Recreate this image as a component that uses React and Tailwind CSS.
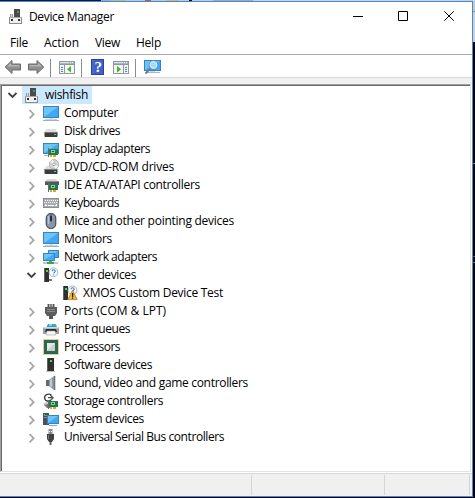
import { useLayoutEffect, useRef } from "react";

/* Text whose tracking is adjusted so that it fills a given width. */
function Label({ w, children }) {
  const ref = useRef(null);
  useLayoutEffect(() => {
    const el = ref.current;
    el.style.letterSpacing = "0px";
    const natural = el.getBoundingClientRect().width;
    el.style.letterSpacing = (w - natural) / children.length + "px";
  }, [w, children]);
  return <span ref={ref} className="inline-block whitespace-nowrap">{children}</span>;
}

function Icon({ children, className = "" }) {
  return (
    <svg width="16" height="16" viewBox="0 0 16 16" className={"block shrink-0 " + className}>
      {children}
    </svg>
  );
}

function Screen({ x, y, w, h }) {
  return (
    <g>
      <rect x={x} y={y} width={w} height={h} fill="#3a83b5" />
      <rect x={x + 1} y={y + 1} width={w - 2} height={h - 2} fill="#3fa9f5" />
      <path d={`M${x + 1} ${y + 1}h${w - 2}L${x + 1} ${y + h - 1}z`} fill="#6cc4fb" />
    </g>
  );
}

function Card({ x, y }) {
  return (
    <g>
      <path d={`M${x} ${y}h1v9h-1z`} fill="#6a6a6a" />
      <rect x={x + 1} y={y + 1} width="9" height="6" fill="#1f7a4d" />
      <rect x={x + 3} y={y + 2} width="4" height="3" fill="#8fd0a8" />
      <rect x={x + 4} y={y + 3} width="2" height="1" fill="#13502f" />
      <path d={`M${x + 2} ${y + 7}h2v2h-2zM${x + 5} ${y + 7}h3v2h-3z`} fill="#f0a020" />
    </g>
  );
}

function Drive({ y }) {
  return (
    <g>
      <path d={`M3.5 ${y}h9l2.5 3.5H1z`} fill="#dedede" />
      <rect x="1.5" y={y + 3} width="13" height="5" rx=".8" fill="#3c3c3c" />
      <rect x="1.5" y={y + 3} width="13" height="1" fill="#7a7a7a" />
      <rect x="11" y={y + 5} width="2" height="1" fill="#45e070" />
    </g>
  );
}

function Tower({ x, y = 1, w = 6, h = 14 }) {
  return (
    <g>
      <rect x={x} y={y} width={w} height={h} fill="#303030" />
      <rect x={x} y={y} width="1" height={h} fill="#626262" />
      <rect x={x + Math.floor(w / 2)} y={y + 2} width="2" height="2" fill="#43e052" />
    </g>
  );
}

function Bubble() {
  return (
    <g>
      <circle cx="10.5" cy="5.3" r="4.4" fill="#f7fafc" stroke="#a6acb2" strokeWidth=".9" />
      <path d="M9 4.2c0-2 3.2-2 3.2 0 0 1.1-1.5 1.2-1.5 2.3M10.7 7.4v1" fill="none" stroke="#2589c5" strokeWidth="1.1" />
    </g>
  );
}

const icons = {
  root: (
    <>
      <rect x="6" y="1" width="6" height="8" fill="#4a4a4a" />
      <rect x="9" y="3" width="2" height="2" fill="#3f9a63" />
      <path d="M2 6h3v3H2z" fill="#9a9a9a" />
      <path d="M3 6h1v3H3z" fill="#d8d8d8" />
      <path d="M1 9h13v7H1z" fill="#8b8b8b" />
      <path d="M2 10h11v5H2z" fill="#f0f0f0" />
      <path d="M1 9h13v1H1z" fill="#a8a8a8" />
      <path d="M3 11h2v2H3zM10 11h2v2h-2z" fill="#2f2f2f" />
    </>
  ),
  monitor: (
    <>
      <Screen x={0} y={1} w={16} h={12} />
      <path d="M6 13h4v1H6z" fill="#d4e2ea" />
      <path d="M2 14h12v1H2z" fill="#c5d3db" />
      <path d="M0 15h16v1H0z" fill="#9bb2c1" />
    </>
  ),
  disk: <Drive y={6} />,
  display: (
    <>
      <Screen x={0} y={2} w={16} h={11} />
      <path d="M1 14h5v1H1z" fill="#a9b9c4" />
      <Card x={5} y={7} />
    </>
  ),
  dvd: (
    <>
      <Drive y={7} />
      <circle cx="11" cy="5.3" r="4.7" fill="#d5d5d5" stroke="#999" strokeWidth=".7" />
      <path d="M11 5.3L7.2 2.8A4.5 4.5 0 0 1 10 .9zM11 5.3l4 2a4.5 4.5 0 0 1-3 2.4z" fill="#f7f7f7" />
      <circle cx="11" cy="5.3" r="1.4" fill="#fff" stroke="#888" strokeWidth=".7" />
    </>
  ),
  ide: (
    <>
      <path d="M4 2h9l2 3H2z" fill="#d8d8d8" />
      <path d="M2 4h14v4H2z" fill="#575757" />
      <path d="M2 4h14v1H2z" fill="#8d8d8d" />
      <Card x={5} y={6} />
    </>
  ),
  keyboard: (
    <>
      <rect x="0" y="3" width="16" height="10" fill="#8a8d91" />
      <rect x="1" y="4" width="14" height="8" fill="#a9acb0" />
      <path d="M2 5.5h13M1 7.5h13M2 9.5h1M13 9.5h1" stroke="#f7f7f7" strokeDasharray="1 1" />
      <path d="M2 10.5h2M5 10.5h6M12 10.5h2" stroke="#f7f7f7" />
    </>
  ),
  mouse: (
    <>
      <rect x="3.2" y=".5" width="9.6" height="15" rx="4.5" fill="#8796ab" stroke="#33383f" />
      <path d="M5.5 3v8" stroke="#b9c4d2" strokeWidth="1.4" />
      <path d="M8 1v5" stroke="#4b5562" />
      <rect x="7" y="2.5" width="2" height="6" rx="1" fill="#272d35" />
    </>
  ),
  network: (
    <>
      <Screen x={5} y={1} w={11} h={8} />
      <Screen x={0} y={4} w={12} h={8} />
      <path d="M6 12h3v2H6z" fill="#53a862" />
      <path d="M0 13h15v2H0z" fill="#c3cbc6" />
      <path d="M4 13h7v2H4z" fill="#35ad4a" />
    </>
  ),
  other: (
    <>
      <Tower x={1} w={5} />
      <path d="M6 12h3v2H6z" fill="#777" />
      <Bubble />
    </>
  ),
  warning: (
    <>
      <Tower x={1} w={5} />
      <Bubble />
      <path d="M10.5 5.3L15.2 14.6H5.8z" fill="#f4b43d" stroke="#b67618" strokeWidth=".8" strokeLinejoin="round" />
      <path d="M10 8h1.2v4H10zM10 12.6h1.2v1.2H10z" fill="#251800" />
    </>
  ),
  ports: (
    <>
      <path d="M4 1h8v4H4z" fill="#b0b0b0" />
      <path d="M5.5 1v3M8 1v3M10.5 1v3" stroke="#555" />
      <path d="M2 4h12v6l-2 3H4l-2-3z" fill="#5c5c5c" />
      <path d="M4 6.5h8M4 8.5h8" stroke="#8b8b8b" strokeWidth="1" />
      <path d="M6 13h4v3H6z" fill="#555" />
    </>
  ),
  print: (
    <>
      <path d="M5 3h8l1 4H3z" fill="#3299df" />
      <path d="M6 3h3v2H6z" fill="#7bd4f4" />
      <path d="M10 3h3v2h-3z" fill="#45bc65" />
      <path d="M1 6h14l1 1v6H0V7z" fill="#9b9fa2" />
      <path d="M1 6h14v1.5H1z" fill="#d7d9db" />
      <path d="M3 8h10l1 3H2z" fill="#292929" />
      <path d="M4 10h8l1 4H3z" fill="#f7f7f7" stroke="#a2a2a2" strokeWidth=".6" />
    </>
  ),
  cpu: (
    <>
      <rect x=".5" y=".5" width="15" height="15" fill="none" stroke="#c69b35" strokeDasharray="1 1" />
      <rect x="1" y="1" width="14" height="14" fill="#2d6650" />
      <rect x="4" y="4" width="8" height="8" fill="#c9cfcb" />
      <path d="M4 4h8L4 12z" fill="#e4e8e5" />
    </>
  ),
  software: (
    <>
      <Tower x={4} y={1} w={7} h={13} />
      <path d="M3 14h9v1H3z" fill="#bbb" />
    </>
  ),
  sound: (
    <>
      <path d="M3 5h3v6H3z" fill="#5f6973" />
      <path d="M6 5l5-4v14l-5-4z" fill="#8f979e" />
      <path d="M7 5.2l2-1.6v8.9l-2-1.6z" fill="#c3c9ce" />
      <path d="M11 1h1.3v14H11z" fill="#6b737b" />
    </>
  ),
  storage: (
    <>
      <path d="M2 10h5v5H4l-3-3z" fill="#777" />
      <path d="M1 10l5-2 1 2-5 2z" fill="#c9c9c9" />
      <path d="M8.5 2.2C5-.3 1 2 1.7 5.6 2.5 8.6 6 8.6 8 7" fill="none" stroke="#3f3f3f" strokeWidth="1.4" />
      <path d="M5 4.6h5M7.3 2.2l2.8 2.6-2.4 2.4" fill="none" stroke="#4c4c4c" strokeWidth="1.2" />
      <Card x={5} y={7} />
    </>
  ),
  system: (
    <>
      <rect x="0" y="2" width="6" height="12" fill="#4b5359" />
      <path d="M1 4.5h4M1 6.5h3" stroke="#929ba1" strokeWidth=".8" />
      <path d="M1 3h1v1H1z" fill="#48d867" />
      <Screen x={4} y={4} w={12} h={9} />
      <path d="M6 14h8v1H6z" fill="#8eaabc" />
    </>
  ),
  usb: (
    <>
      <path d="M5.5 0h4v5h-4z" fill="#8b8b8b" />
      <path d="M6 2h1v1H6zM8 2h1v1H8z" fill="#fff" />
      <path d="M4 5h7v5l-2 3H6l-2-3z" fill="#424242" />
      <path d="M5 6h1v4H5z" fill="#777" />
      <path d="M6.5 13h2v3h-2z" fill="#626262" />
    </>
  ),
};

const rows = [
  ["Computer", "monitor", 54],
  ["Disk drives", "disk", 56],
  ["Display adapters", "display", 86],
  ["DVD/CD-ROM drives", "dvd", 110],
  ["IDE ATA/ATAPI controllers", "ide", 136],
  ["Keyboards", "keyboard", 55],
  ["Mice and other pointing devices", "mouse", 170],
  ["Monitors", "monitor", 48],
  ["Network adapters", "network", 93],
  ["Other devices", "other", 72, "open"],
  ["XMOS Custom Device Test", "warning", 140, "leaf"],
  ["Ports (COM & LPT)", "ports", 102],
  ["Print queues", "print", 66],
  ["Processors", "cpu", 56],
  ["Software devices", "software", 88],
  ["Sound, video and game controllers", "sound", 184],
  ["Storage controllers", "storage", 99],
  ["System devices", "system", 80],
  ["Universal Serial Bus controllers", "usb", 160],
];

function Chevron({ open }) {
  return (
    <svg width="10" height="18" viewBox="0 0 10 18" className="block shrink-0">
      {open ? (
        <path d="M1.5 7l4 4 4-4" fill="none" stroke="#404040" strokeWidth="1.8" />
      ) : (
        <path d="M3.6 6l4 4.2-4 4.2" fill="none" stroke="#a6a6a6" strokeWidth="1.8" />
      )}
    </svg>
  );
}

function Row({ row: [text, icon, w, kind] }) {
  return (
    <div className={"flex h-[18px] " + (kind === "leaf" ? "pl-[60px]" : "pl-[24px]")}>
      {kind !== "leaf" && <Chevron open={kind === "open"} />}
      <Icon className={kind === "leaf" ? "mt-px" : "mt-px ml-[7px]"}>{icons[icon]}</Icon>
      <span className="ml-[5px] leading-[18px]"><Label w={w}>{text}</Label></span>
    </div>
  );
}

function Arrow({ flip }) {
  return (
    <svg width="18" height="16" viewBox="0 0 18 16" className={"block shrink-0 " + (flip ? "-scale-x-100" : "")}>
      <path d="M1.2 8L8 1.5V5h8.5v6H8v3.5z" fill="#8f8f8f" stroke="#686868" strokeLinejoin="round" />
      <path d="M3 7.5L7 3.7V6h8.5v1.5z" fill="#b4b4b4" />
    </svg>
  );
}

function Panel({ flip }) {
  return (
    <Icon>
      <rect x=".5" y="2.5" width="15" height="12" fill="#f5f5f5" stroke="#8d98a1" />
      <path d="M1 3h14v2H1z" fill="#aab4bc" />
      <path d="M1 3h9v1H1z" fill="#dfe4e8" />
      <path d="M11 3.5h1M13 3.5h1" stroke="#f4f6f7" />
      <path d="M1 5.5h14" stroke="#8d98a1" />
      {flip ? (
        <>
          <path d="M10.5 6v8" stroke="#8d98a1" />
          <path d="M12 8.5h2M12 10.5h2M12 12.5h2" stroke="#4783b7" />
          <path d="M4 7l4 3.2-4 3.2z" fill="#41b52e" />
        </>
      ) : (
        <>
          <path d="M5.5 6v8" stroke="#8d98a1" />
          <path d="M2 8.5h2M2 10.5h2M2 12.5h2" stroke="#4783b7" />
          <path d="M12 7l-4 3.2 4 3.2z" fill="#41b52e" />
        </>
      )}
    </Icon>
  );
}

const Sep = ({ className }) => <span className={"h-[18px] w-px shrink-0 bg-[#8c8c8c] " + className} />;

export default function App() {
  return (
    <div className="flex h-[498px] w-[475px] flex-col overflow-hidden bg-black text-[12px] text-black [font-family:'Open_Sans','Noto_Sans',sans-serif]">
      <div className="flex h-px shrink-0">
        <span className="w-[101px] bg-[#0b1523]" />
        <span className="w-[10px] bg-[#aaa]" />
        <span className="w-[14px] bg-[#c8b977]" />
        <span className="w-[20px] bg-[#c5c5c5]" />
        <span className="w-[6px] bg-[#d0553c]" />
        <span className="w-[15px] bg-[#c5c5c5]" />
        <span className="w-[13px] bg-[#d5b95a]" />
        <span className="w-[10px] bg-[#c9c9c9]" />
        <span className="w-[3px] bg-black" />
        <span className="w-[21px] bg-[#c9c9c9]" />
        <span className="w-[40px] bg-[#a9a9a9]" />
        <span className="grow bg-[#d0d0d0]" />
      </div>
      <div className="flex h-[496px]">
        <div className="flex w-[473px] flex-col border-y border-r border-[#3c8ce0] bg-[#f0f0f0]">
          <div className="flex h-[29px] shrink-0 bg-white">
            <Icon className="ml-[8px] mt-[6px]">{icons.root}</Icon>
            <span className="ml-[5px] mt-[5px] leading-[20px]"><Label w={85}>Device Manager</Label></span>
            <svg width="102" height="12" viewBox="0 0 102 12" className="ml-auto mr-[17px] mt-[8px]" fill="none" stroke="#000">
              <path d="M0 6.5h10M45.5 1.5h9v9h-9z" />
              <path d="M91.3 1.3l9.4 9.4M100.7 1.3l-9.4 9.4" />
            </svg>
          </div>
          <div className="flex h-[24px] shrink-0 border-b border-[#a9a9a9] bg-white leading-[23px]">
            <span className="ml-[10px] w-[34px]"><Label w={18}>File</Label></span>
            <span className="w-[51px]"><Label w={35}>Action</Label></span>
            <span className="w-[41px]"><Label w={25}>View</Label></span>
            <span><Label w={25}>Help</Label></span>
          </div>
          <div className="flex h-[23px] shrink-0 border-b border-[#d9d9d9] bg-white pl-[4px] pt-[4px]">
            <Arrow />
            <span className="w-[5px]" />
            <Arrow flip />
            <Sep className="ml-[5px] mr-[8px]" />
            <Panel />
            <Sep className="ml-[6px] mr-[9px]" />
            <svg width="13" height="16" viewBox="0 0 13 16" className="block shrink-0">
              <rect width="13" height="16" fill="#2743a5" />
              <rect x="1" y="1" width="2" height="14" fill="#4a68c8" />
              <rect x="3" y="1" width="9" height="14" fill="#3e61cb" />
              <text x="7.3" y="13" textAnchor="middle" fontSize="15" fontWeight="bold" fill="#fff" className="[font-family:'Liberation_Serif',serif]">?</text>
            </svg>
            <span className="w-[9px]" />
            <Panel flip />
            <Sep className="ml-[6px] mr-[8px]" />
            <Icon className="overflow-visible">
              <Screen x={0} y={1} w={17} h={11} />
              <path d="M6 12h5v1H6z" fill="#c4d9e5" />
              <path d="M3 13.5h13" stroke="#a9b8c1" />
              <path d="M1.5 14.5l5-5" stroke="#5f7f97" strokeWidth="2" />
              <circle cx="9.5" cy="6" r="4.3" fill="#a4dbfa" stroke="#5c87a5" strokeWidth="1" />
              <circle cx="9.5" cy="6" r="3.5" fill="none" stroke="#e3f3fc" strokeWidth=".9" />
            </Icon>
          </div>
          <div className="mt-[6px] flex h-[389px] shrink-0 border-b border-white bg-white">
            <div className="h-[388px] w-[471px] border-t border-b border-l border-r border-t-[#a0a0a0] border-l-[#a0a0a0] border-r-[#e3e3e3] border-b-[#e3e3e3]">
              <div className="h-full border-l border-t border-[#696969]">
                <div className="flex h-[18px] pl-[5px]">
                  <Chevron open />
                  <div className="ml-[5px] flex w-[70px] bg-[#cce8ff] pl-[2px]">
                    <Icon className="mt-px">{icons.root}</Icon>
                    <span className="ml-[5px] leading-[18px]"><Label w={43}>wishfish</Label></span>
                  </div>
                </div>
                {rows.map((r) => <Row key={r[0]} row={r} />)}
              </div>
            </div>
          </div>
          <div className="flex h-[23px] shrink-0 border-t border-[#d9d9d9] py-px">
            <span className="ml-[251px] w-px bg-[#d5d5d5]" />
            <span className="ml-[132px] w-px bg-[#d5d5d5]" />
            <span className="ml-[84px] w-px bg-[#d5d5d5]" />
          </div>
        </div>
        <div className="flex w-[2px] flex-col">
          <span className="h-[10px] bg-[#c8c8c8]" />
          <span className="h-px bg-[#888]" />
          <span className="h-[30px] bg-[#d0d0d0]" />
          <span className="mt-[121px] h-px bg-[#777]" />
          <span className="mt-[92px] h-px bg-[#456]" />
          <span className="mt-[5px] h-px bg-[#777]" />
        </div>
      </div>
    </div>
  );
}
